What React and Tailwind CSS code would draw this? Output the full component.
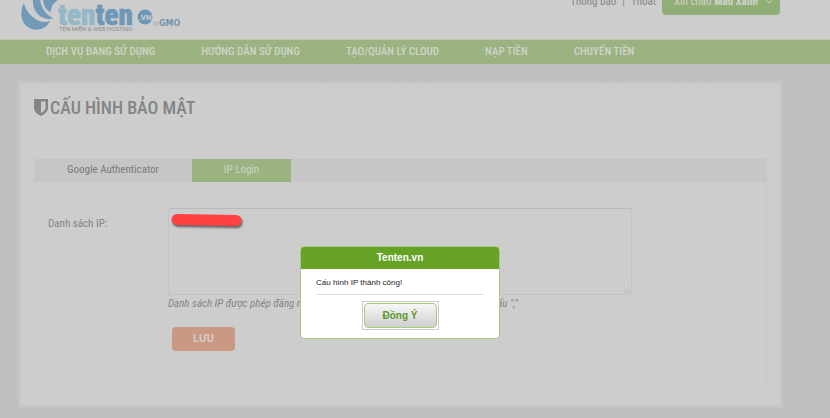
import { useState } from "react";

const menu = [
  "DỊCH VỤ ĐANG SỬ DỤNG",
  "HƯỚNG DẪN SỬ DỤNG",
  "TẠO/QUẢN LÝ CLOUD",
  "NẠP TIỀN",
  "CHUYỂN TIỀN",
];

const Logo = () => (
  <svg width="164" height="40" viewBox="0 0 164 40" role="img" aria-label="tenten.vn">
    <path d="M3 3C-1 10 -1 22 7 27C14 32 25 30 29 21C24 23 18 22 13 18C8 14 4 9 3 3Z" fill="#7199b8" />
    <path d="M12 -2C11 8 16 16 23 18C27 20 31 19 32 18C25 15 19 7 19 -2Z" fill="#7199b8" />
    <path d="M22 -2C22 5 25 11 30 12C30 7 32 3 37 0L36 -3Z" fill="#7199b8" />
    <text x="37" y="25" fontFamily="Roboto Condensed, Roboto, sans-serif" fontSize="29" fontWeight="900" fill="#94b8c7" stroke="#94b8c7" strokeWidth="0.5">
      ten<tspan fill="#6f98b8" stroke="#6f98b8">ten</tspan>
    </text>
    <circle cx="124" cy="17" r="7.5" fill="#6c95b7" />
    <text x="124" y="20" textAnchor="middle" fontFamily="Roboto, sans-serif" fontSize="8" fontWeight="700" fill="#cdcdcd">.VN</text>
    <text x="132" y="25" fontFamily="Roboto, sans-serif" fontSize="5" fill="#8ba6bb">by</text>
    <text x="138" y="26" fontFamily="DejaVu Sans, sans-serif" fontSize="8" fontWeight="700" fill="#7894ad">GMO</text>
    <text x="38" y="31" fontFamily="Roboto, sans-serif" fontSize="6" fill="#8c8c8c">TÊN MIỀN &amp; WEB HOSTING</text>
  </svg>
);

const App = () => {
  const [open, setOpen] = useState(true);

  return (
    <div className="relative min-h-screen bg-[#bfbfbf] bg-[repeating-linear-gradient(45deg,#bebebe_0px,#bebebe_1px,#c0c0c0_1px,#c0c0c0_3px)] pb-[10px] font-['Roboto_Condensed','Roboto',sans-serif] text-[11px] text-[#858585]">
      <header className="flex h-10 items-start justify-between overflow-hidden border-b border-[#bac5ae] bg-[#cdcdcd] pr-[50px] pl-[21px]">
        <a href="#home"><Logo /></a>
        <div className="-mt-[11px] flex h-[26px] items-center">
          <a href="#notice">Thông báo</a>
          <span className="mx-[6px]">|</span>
          <a href="#logout">Thoát</a>
          <button className="ml-[6px] flex h-full w-[118px] items-center justify-between rounded-b bg-[#92ae77] pr-[7px] pl-3 text-[#d0d4cb]">
            <span className="whitespace-nowrap">Xin chào <b>Màu Xanh</b></span>
            <svg width="8" height="6" viewBox="0 0 8 6" fill="none" stroke="#c9d1c1"><path d="M1 1l3 3 3-3" /></svg>
          </button>
        </div>
      </header>

      <nav className="flex h-6 items-center gap-[46px] bg-[#9bb380] pl-[46px] font-medium text-[#cfd3ca]">
        {menu.map((m) => (
          <a key={m} href="#menu" className="whitespace-nowrap">{m}</a>
        ))}
      </nav>

      <main className="mt-[17px] mr-[47px] ml-[18px] border-[3px] border-[#c6c6c6] bg-[#cdcdcd] px-[13px] pb-[13px]">
        <h1 className="flex h-[75px] items-start gap-[2px] pt-3 text-[18px] leading-6 font-medium text-[#848585]">
          <svg className="mt-[3px]" width="14" height="17" viewBox="0 0 14 17" aria-hidden="true">
            <path fill="#848585" fillRule="evenodd" d="M0 0H14V9C14 12.500 10.500 15.500 7 17C3.500 15.500 0 12.500 0 9ZM7 2.500V14C9.500 12.700 11.500 11 11.500 9V2.500Z" />
          </svg>
          CẤU HÌNH BẢO MẬT
        </h1>

        <div className="flex h-[23px] bg-[#c6c6c6]">
          <button className="w-[158px] text-[#7a7a7a]">Google Authenticator</button>
          <button className="w-[99px] bg-[#9bb380] text-[#cfd3ca]">IP Login</button>
        </div>

        <form className="flex h-[210px] border border-t-0 border-[#c8c8c8] pt-[26px] pr-[134px] pl-[13px]" onSubmit={(e) => e.preventDefault()}>
          <label htmlFor="ips" className="w-[120px] shrink-0 pt-2 leading-4">Danh sách IP:</label>
          <div className="min-w-0 flex-1">
            <div className="relative">
              <textarea id="ips" className="block h-[87px] w-full resize-none rounded-[3px] border border-[#c3c3c3] border-t-[#bababa] bg-transparent p-2" />
              <svg className="absolute right-[2px] bottom-[2px]" width="6" height="6" viewBox="0 0 6 6" fill="#adadad" aria-hidden="true">
                <path d="M4 0h1v1h-1zM2 2h1v1h-1zM4 2h1v1h-1zM0 4h1v1h-1zM2 4h1v1h-1zM4 4h1v1h-1z" />
              </svg>
              <svg className="absolute top-[4px] left-0 drop-shadow-[1px_2px_1px_#00000088]" width="80" height="18" viewBox="0 0 80 18" aria-hidden="true">
                <path d="M9 7.500L68 8.500" stroke="#ff4141" strokeWidth="11" strokeLinecap="round" />
              </svg>
            </div>
            <p className="pt-[1px] leading-4 whitespace-nowrap italic">
              Danh sách IP được phép đăng nhập vào tài khoản, địa chỉ IP cách nhau bằng dấu ","
            </p>
            <button className="mt-[15px] ml-1 h-6 w-[63px] rounded bg-[#ca9984] font-['Roboto',sans-serif] font-bold text-[#d4cbc7]">LƯU</button>
          </div>
        </form>
      </main>

      {open && (
        <div className="absolute inset-x-0 top-[246px] flex justify-center pr-[30px]">
          <div role="dialog" aria-labelledby="dlg" className="w-[200px] overflow-hidden rounded border border-[#a5ca80] bg-white font-['Liberation_Sans',sans-serif]">
            <h2 id="dlg" className="h-[22px] bg-[#65a226] text-center text-[10px] leading-[22px] font-bold text-white">Tenten.vn</h2>
            <div className="px-[15px] pb-2">
              <p className="h-[26px] border-b border-[#dddddd] pt-2 text-[8px] leading-3 text-[#222222]">Cấu hình IP thành công!</p>
              <div className="mx-auto mt-[6px] w-[77px] border border-[#cccccc] p-px">
                <button
                  onClick={() => setOpen(false)}
                  className="block h-[25px] w-full rounded border border-[#a5d077] bg-linear-to-b from-[#f7f7f7] to-[#cfcfcf] text-[10px] font-bold text-[#5c9728]"
                >
                  Đồng Ý
                </button>
              </div>
            </div>
          </div>
        </div>
      )}
    </div>
  );
};

export default App;
